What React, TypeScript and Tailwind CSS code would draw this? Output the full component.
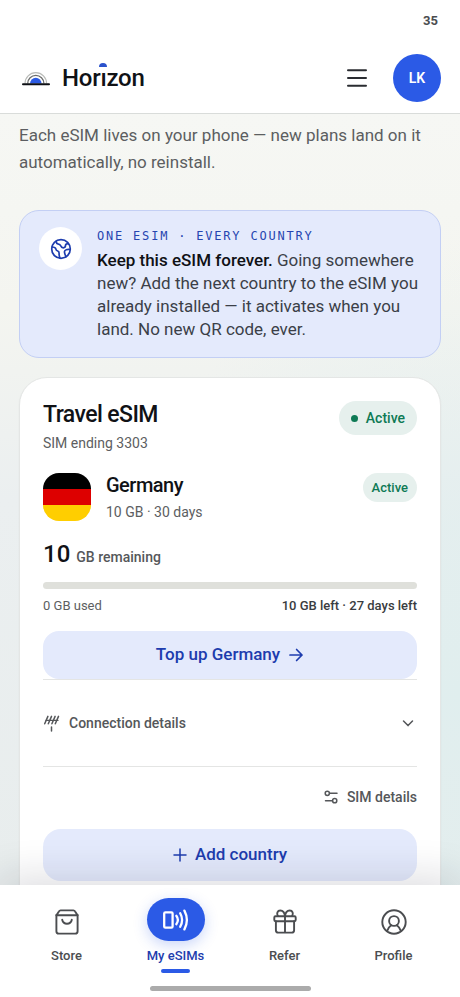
import React, { useState } from 'react';

function HorizonMark() {
  return (
    <svg width="28" height="16" viewBox="0 0 28 16" fill="none" aria-hidden="true">
      <path d="M3 13.5a10.8 10.8 0 0 1 21.6 0" stroke="#b9bbb8" strokeWidth="1.2" />
      <path d="M5.7 13.5a8.1 8.1 0 0 1 16.2 0" stroke="#6c6e6d" strokeWidth="1.3" />
      <path d="M8 13.5a5.8 5.8 0 0 1 11.6 0z" fill="#2b5ae3" />
      <path d="M1 14.3h26" stroke="#0d0f14" strokeWidth="2" strokeLinecap="round" />
    </svg>
  );
}

function GlobeIcon() {
  return (
    <svg width="22" height="22" viewBox="0 0 22 22" fill="none" stroke="#1d3cae" strokeWidth="1.7" strokeLinecap="round" strokeLinejoin="round" aria-hidden="true">
      <circle cx="11" cy="11" r="9.3" />
      <path d="M6.2 3.2c0 1.600.5 2.400 1.700 2.700 1.500.3 2.400.8 2.800 1.900.5 1.300 1.400 2 2.600 2 1.400 0 2.200-.9 2.200-2.200 0-1.200.8-1.800 2.900-1.900" />
      <path d="M1.900 9c2.200.1 3.700.6 3.900 1.900.2 1.200.9 1.800 1.900 2.100 1.200.4 1.500 1.200 1.400 2.500-.1 1.400.2 2.700.8 4.600" />
      <path d="M20.200 11.500c-1.500-.3-2.800-.3-4 .2-1.300.5-1.900 1.500-1.700 2.600.2 1.300.6 2.700 1.600 4.400" />
    </svg>
  );
}

function ArrowIcon() {
  return (
    <svg width="16" height="16" viewBox="0 0 16 16" fill="none" stroke="currentColor" strokeWidth="1.7" strokeLinecap="round" strokeLinejoin="round" aria-hidden="true">
      <path d="M2 8h12M8.6 2.5L14 8l-5.4 5.5" />
    </svg>
  );
}

function AntennaIcon() {
  return (
    <svg width="18" height="18" viewBox="0 0 18 18" fill="none" stroke="currentColor" strokeWidth="1.5" strokeLinecap="round" aria-hidden="true">
      <path d="M3 6.4h12" strokeWidth="1.2" />
      <path d="M1.7 9.7L4.9 2.4M5.3 9.7L8.5 2.4M8.900 9.7l3.2-7.3M12.3 9.7l3.2-7.3" />
      <path d="M8.5 13v4" />
    </svg>
  );
}

function SlidersIcon() {
  return (
    <svg width="16" height="16" viewBox="0 0 16 16" fill="none" stroke="currentColor" strokeWidth="1.5" strokeLinecap="round" aria-hidden="true">
      <circle cx="4.3" cy="4.3" r="2.1" />
      <path d="M6.6 4.3H14" />
      <circle cx="11.7" cy="11.7" r="2.1" />
      <path d="M9.4 11.7H2.5" />
    </svg>
  );
}

function StoreIcon() {
  return (
    <svg width="26" height="26" viewBox="0 0 26 26" fill="none" stroke="currentColor" strokeWidth="1.9" strokeLinecap="round" strokeLinejoin="round" aria-hidden="true">
      <path d="M2.4 6v16.2a2.4 2.4 0 0 0 2.4 2.4h16.4a2.4 2.4 0 0 0 2.4-2.4V6" />
      <path d="M2.4 6.2l2.5-3.8a2 2 0 0 1 1.7-1h12.8a2 2 0 0 1 1.7 1l2.5 3.8z" />
      <path d="M8.2 10.8a4.9 4.9 0 0 0 9.6 0" />
    </svg>
  );
}

function EsimIcon() {
  return (
    <svg width="28" height="24" viewBox="0 0 28 24" fill="none" stroke="currentColor" strokeWidth="2.3" strokeLinecap="round" aria-hidden="true">
      <rect x="2.2" y="4.4" width="8.4" height="15.2" rx="1.2" />
      <path d="M14.3 7.8a7 7 0 0 1 0 8.4" />
      <path d="M18.2 5.2a14 14 0 0 1 0 13.600" />
      <path d="M22.4 2.6a20 20 0 0 1 0 18.8" />
    </svg>
  );
}

function GiftIcon() {
  return (
    <svg width="26" height="26" viewBox="0 0 26 26" fill="none" stroke="currentColor" strokeWidth="1.9" strokeLinecap="round" strokeLinejoin="round" aria-hidden="true">
      <rect x="2.3" y="7.2" width="21.4" height="5" rx="1.2" />
      <path d="M3.9 12.2v9a2.4 2.4 0 0 0 2.4 2.4h13.4a2.4 2.4 0 0 0 2.4-2.4v-9M13 7.2v16.4" />
      <path d="M13 7.2C12.6 3.5 10.8 1.5 8.3 1.5 5.4 1.5 4.3 4.7 5.9 7M13 7.2c.4-3.7 2.2-5.7 4.7-5.7 2.9 0 4 3.2 2.4 5.5" />
    </svg>
  );
}

function ProfileIcon() {
  return (
    <svg width="26" height="26" viewBox="0 0 26 26" fill="none" stroke="currentColor" strokeWidth="1.9" strokeLinecap="round" aria-hidden="true">
      <circle cx="13" cy="13" r="11.7" />
      <circle cx="13" cy="12" r="4.9" />
      <path d="M6 22.2c.8-3 2-4.5 4.2-6M20 22.2c-.8-3-2-4.5-4.2-6" />
    </svg>
  );
}

const tabs = [
  { label: 'Store', Icon: StoreIcon },
  { label: 'My eSIMs', Icon: EsimIcon },
  { label: 'Refer', Icon: GiftIcon },
  { label: 'Profile', Icon: ProfileIcon },
];

function Header() {
  return (
    <header className="shrink-0 border-b border-[#d9dcda] bg-white">
      <div className="flex h-[42px] items-center justify-end px-[22px] text-[13px] font-bold text-[#4b4d50]">35</div>
      <div className="flex h-[71px] items-center justify-between px-[19px]">
        <a href="#home" aria-label="Horizon" className="flex items-center gap-3 pl-[3px]">
          <HorizonMark />
          <span className="text-2xl font-medium tracking-[-0.01em] text-[#101216]">
            Hor
            <span className="relative">
              ı
              <svg className="absolute -top-px left-1/2 -translate-x-1/2" width="8" height="4" viewBox="0 0 8 4" aria-hidden="true">
                <path d="M0 4a4 4 0 0 1 8 0z" fill="#2b52cc" />
              </svg>
            </span>
            zon
          </span>
        </a>
        <div className="flex items-center gap-6">
          <button type="button" aria-label="Menu" className="p-0.5 text-[#2a2c31]">
            <svg width="20" height="20" viewBox="0 0 20 20" fill="none" stroke="currentColor" strokeWidth="2" strokeLinecap="round" aria-hidden="true">
              <path d="M1 2.3h18M1 10h18M1 17.7h18" />
            </svg>
          </button>
          <button type="button" className="size-12 rounded-full bg-[#2b5ae6] text-sm font-semibold text-white">LK</button>
        </div>
      </div>
    </header>
  );
}

function Callout() {
  return (
    <section className="mt-[34px] flex gap-[15px] rounded-[20px] border border-[#c3cff4] bg-[#e4eafc] px-[19px] py-4">
      <div className="flex size-[43px] shrink-0 items-center justify-center rounded-full bg-white">
        <GlobeIcon />
      </div>
      <div>
        <p className="font-['DejaVu_Sans_Mono',monospace] text-xs leading-[18px] tracking-[0.15em] text-[#2645b0]">ONE ESIM · EVERY COUNTRY</p>
        <p className="mt-1 text-[17px] leading-[23px] text-[#3b3f48]">
          <strong className="font-medium text-[#0f1115]">Keep this eSIM forever.</strong> Going somewhere new? Add the next country to the eSIM you already installed — it activates when you land. No new QR code, ever.
        </p>
      </div>
    </section>
  );
}

function SimCard() {
  const [open, setOpen] = useState(false);
  const usedGb = 0;
  const totalGb = 10;

  return (
    <section className="mt-[19px] rounded-[28px] border border-[#e4e6e5] bg-white px-[23px] pt-[23px] pb-8 shadow-xs">
      <div className="flex items-start justify-between">
        <div>
          <h2 className="text-[23px] leading-7 font-medium tracking-tight text-[#101216]">Travel eSIM</h2>
          <p className="mt-1 text-sm leading-5 text-[#5c5e61]">SIM ending 3303</p>
        </div>
        <span className="flex h-[34px] items-center gap-2 rounded-full bg-[#e6f0ed] px-3 text-sm font-medium text-[#0e7a55]">
          <span className="size-[7px] rounded-full bg-[#0e7a55]" />
          Active
        </span>
      </div>

      <div className="mt-5 flex items-start">
        <svg className="size-12 rounded-2xl" viewBox="0 0 3 3" role="img" aria-label="Flag of Germany">
          <path d="M0 0h3v1H0z" fill="#000" />
          <path d="M0 1h3v1H0z" fill="#dd0000" />
          <path d="M0 2h3v1H0z" fill="#ffce00" />
        </svg>
        <div className="ml-[15px] flex-1">
          <h3 className="text-xl leading-6 font-medium tracking-tight text-[#101216]">Germany</h3>
          <p className="mt-[5px] text-sm leading-5 text-[#5c5e61]">10 GB · 30 days</p>
        </div>
        <span className="flex h-[29px] items-center rounded-full bg-[#e6f0ed] px-[9px] text-[13px] font-medium text-[#0e7a55]">Active</span>
      </div>

      <p className="mt-[18px] flex items-baseline gap-1.5 text-sm leading-7 font-medium text-[#55575a]">
        <span className="text-2xl leading-7 text-[#101216]">10</span>
        GB remaining
      </p>
      <div className="mt-[11px] h-[7px] overflow-hidden rounded-full bg-[#dfe0db]">
        <div className="h-full bg-[#2b5ae6]" style={{ width: `${(usedGb / totalGb) * 100}%` }} />
      </div>
      <div className="mt-[7px] flex justify-between text-[13px] leading-5">
        <span className="text-[#5c5e61]">0 GB used</span>
        <span className="font-medium text-[#3a3c40]">10 GB left · 27 days left</span>
      </div>

      <button type="button" className="mt-[15px] flex h-12 w-full items-center justify-center gap-2 rounded-2xl bg-[#e4eafc] text-[17px] font-medium text-[#1d3cae]">
        Top up Germany
        <ArrowIcon />
      </button>

      <button
        type="button"
        aria-expanded={open}
        onClick={() => setOpen(!open)}
        className="flex h-[88px] w-full items-center border-y border-[#e4e5e4] text-sm font-medium text-[#55575a]"
      >
        <AntennaIcon />
        <span className="ml-2">Connection details</span>
        <svg className="mr-[3px] ml-auto" width="12" height="12" viewBox="0 0 12 12" fill="none" stroke="currentColor" strokeWidth="1.5" strokeLinecap="round" strokeLinejoin="round" aria-hidden="true">
          <path d="M1.5 4L6 8.6 10.5 4" />
        </svg>
      </button>

      <div className="flex justify-end pt-5">
        <button type="button" className="flex items-center gap-2 text-sm leading-5 font-medium text-[#55575a]">
          <SlidersIcon />
          SIM details
        </button>
      </div>

      <button type="button" className="mt-[22px] flex h-[52px] w-full items-center justify-center gap-2 rounded-[18px] bg-[#e4eafc] text-[17px] font-medium text-[#1d3cae]">
        <svg width="14" height="14" viewBox="0 0 14 14" fill="none" stroke="currentColor" strokeWidth="1.5" strokeLinecap="round" aria-hidden="true">
          <path d="M7 1v12M1 7h12" />
        </svg>
        Add country
      </button>
    </section>
  );
}

function TabBar() {
  const [active, setActive] = useState('My eSIMs');

  return (
    <nav className="relative shrink-0 bg-white px-3 pt-[13px] pb-[6px] shadow-[0_-8px_40px_rgba(20,24,40,0.14)]">
      <div className="grid grid-cols-4">
        {tabs.map(({ label, Icon }) => {
          const isActive = label === active;
          return (
            <button
              key={label}
              type="button"
              aria-current={isActive ? 'page' : undefined}
              onClick={() => setActive(label)}
              className={`flex flex-col items-center text-[13px] leading-5 font-medium ${isActive ? 'text-[#1d3cae]' : 'text-[#4b4d50]'}`}
            >
              <span
                className={`flex h-[43px] w-[58px] items-center justify-center rounded-full ${
                  isActive ? 'bg-[#2b5ae6] text-white shadow-[0_4px_14px_rgba(43,90,230,0.25)]' : 'pt-1'
                }`}
              >
                <Icon />
              </span>
              <span className="mt-[5px]">{label}</span>
              <span className={`mt-[3px] h-1 w-[29px] rounded-full ${isActive ? 'bg-[#2b5ae6]' : 'bg-transparent'}`} />
            </button>
          );
        })}
      </div>
      <div className="mx-auto mt-[13px] h-[5px] w-[161px] rounded-full bg-[#ababab]" />
    </nav>
  );
}

export default function App() {
  return (
    <div className="flex h-screen flex-col bg-white font-['Roboto',sans-serif]">
      <Header />
      <main className="min-h-0 flex-1 overflow-y-auto bg-[radial-gradient(ellipse_at_100%_75%,#e0eeee_0%,transparent_55%),linear-gradient(180deg,#f6f7f4_0%,#f4f5f0_25%,#ebeff0_50%,#e8eded_100%)] px-[19px] pt-2 [scrollbar-width:none]">
        <p className="text-[17px] leading-[27px] text-[#5c5e61]">
          Each eSIM lives on your phone — new plans land on it automatically, no reinstall.
        </p>
        <Callout />
        <SimCard />
      </main>
      <TabBar />
    </div>
  );
}
